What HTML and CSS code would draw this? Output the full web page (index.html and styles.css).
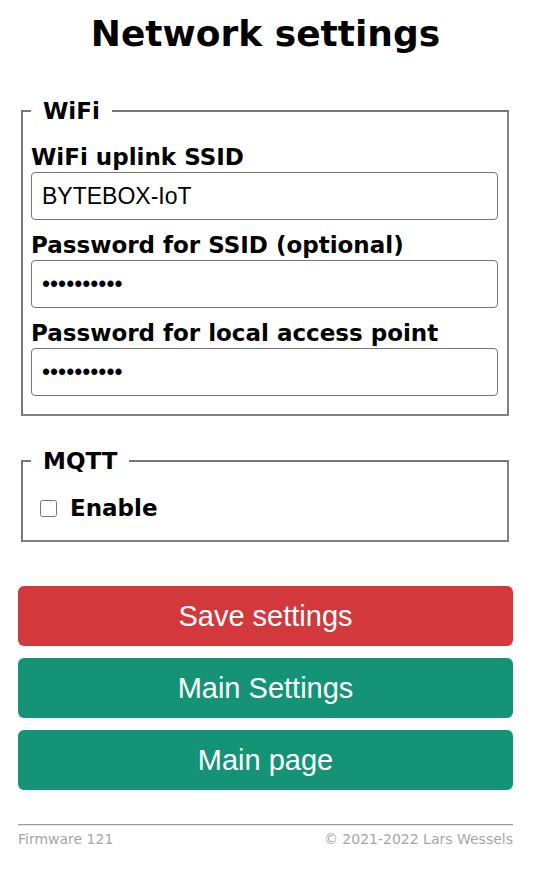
FILE: index.html
```html
<!DOCTYPE html>
<html>
<head>
<meta charset="utf-8">
<link rel="stylesheet" href="styles.css">
</head>
<body>
<div class="page">
  <h1 class="title">Network settings</h1>
  <form class="form">
    <fieldset class="group">
      <legend class="legend">WiFi</legend>
      <label class="label label-first">WiFi uplink SSID</label>
      <input class="field" type="text" value="BYTEBOX-IoT">
      <label class="label">Password for SSID (optional)</label>
      <input class="field" type="password" value="1234567890">
      <label class="label">Password for local access point</label>
      <input class="field" type="password" value="1234567890">
    </fieldset>
    <fieldset class="group group-mqtt">
      <legend class="legend">MQTT</legend>
      <label class="check"><input class="box" type="checkbox"><span>Enable</span></label>
    </fieldset>
    <div class="buttons">
      <button class="btn btn-red" type="button">Save settings</button>
      <button class="btn btn-green" type="button">Main Settings</button>
      <button class="btn btn-green" type="button">Main page</button>
    </div>
  </form>
  <footer class="footer">
    <span>Firmware 121</span>
    <span>© 2021-2022 Lars Wessels</span>
  </footer>
</div>
</body>
</html>
```
FILE: styles.css
```css
html, body {
  margin: 0;
  padding: 0;
  background: #fff;
}
.page {
  padding: 0 23px 0 18px;
  font-family: "DejaVu Sans", Verdana, sans-serif;
  font-size: 18px;
  color: #000;
}
.title {
  font-size: 36px;
  font-weight: bold;
  text-align: center;
  margin: 0;
  padding-top: 10px;
  line-height: 48px;
}
.form {
  margin-top: 40px;
}
.group {
  margin: 0 4px 0 3px;
  border: 2px solid #777;
  border-right-color: #808080;
  border-bottom-color: #808080;
  padding: 9px 9px 18px 8px;
  display: flex;
  flex-direction: column;
  min-width: 0;
}
.group-mqtt {
  margin-top: 32px;
}
.legend {
  font-weight: bold;
  font-size: 23px;
  padding: 0 12px;
  margin: 0;
}
.label {
  font-weight: bold;
  font-size: 23px;
  line-height: 28px;
  margin: 11px 0 1px;
  display: block;
}
.label-first {
  margin-top: 10px;
}
.field {
  font-family: "Liberation Sans", Arial, sans-serif;
  font-size: 23px;
  height: 48px;
  box-sizing: border-box;
  border: 1px solid #767676;
  border-radius: 4px;
  padding: 0 10px;
  margin: 0;
  width: 100%;
  color: #000;
}
.check {
  font-weight: bold;
  font-size: 23px;
  line-height: 28px;
  display: flex;
  align-items: center;
  gap: 13px;
  margin-top: 11px;
  padding-left: 9px;
}
.box {
  width: 17px;
  height: 17px;
  margin: 0;
}
.buttons {
  display: flex;
  flex-direction: column;
  gap: 12px;
  margin-top: 44px;
}
.btn {
  font-family: "Liberation Sans", Arial, sans-serif;
  font-size: 29px;
  color: #fff;
  border: 0;
  border-radius: 6px;
  height: 60px;
  width: 100%;
  padding: 0;
}
.btn-red { background: #d3393c; }
.btn-green { background: #159376; }
.footer {
  margin-top: 34px;
  border-top: 1px solid #999;
  box-shadow: inset 0 1px 0 #e8e8e8;
  padding-top: 6px;
  display: flex;
  justify-content: space-between;
  font-size: 14px;
  color: #a6a6a6;
}
```
